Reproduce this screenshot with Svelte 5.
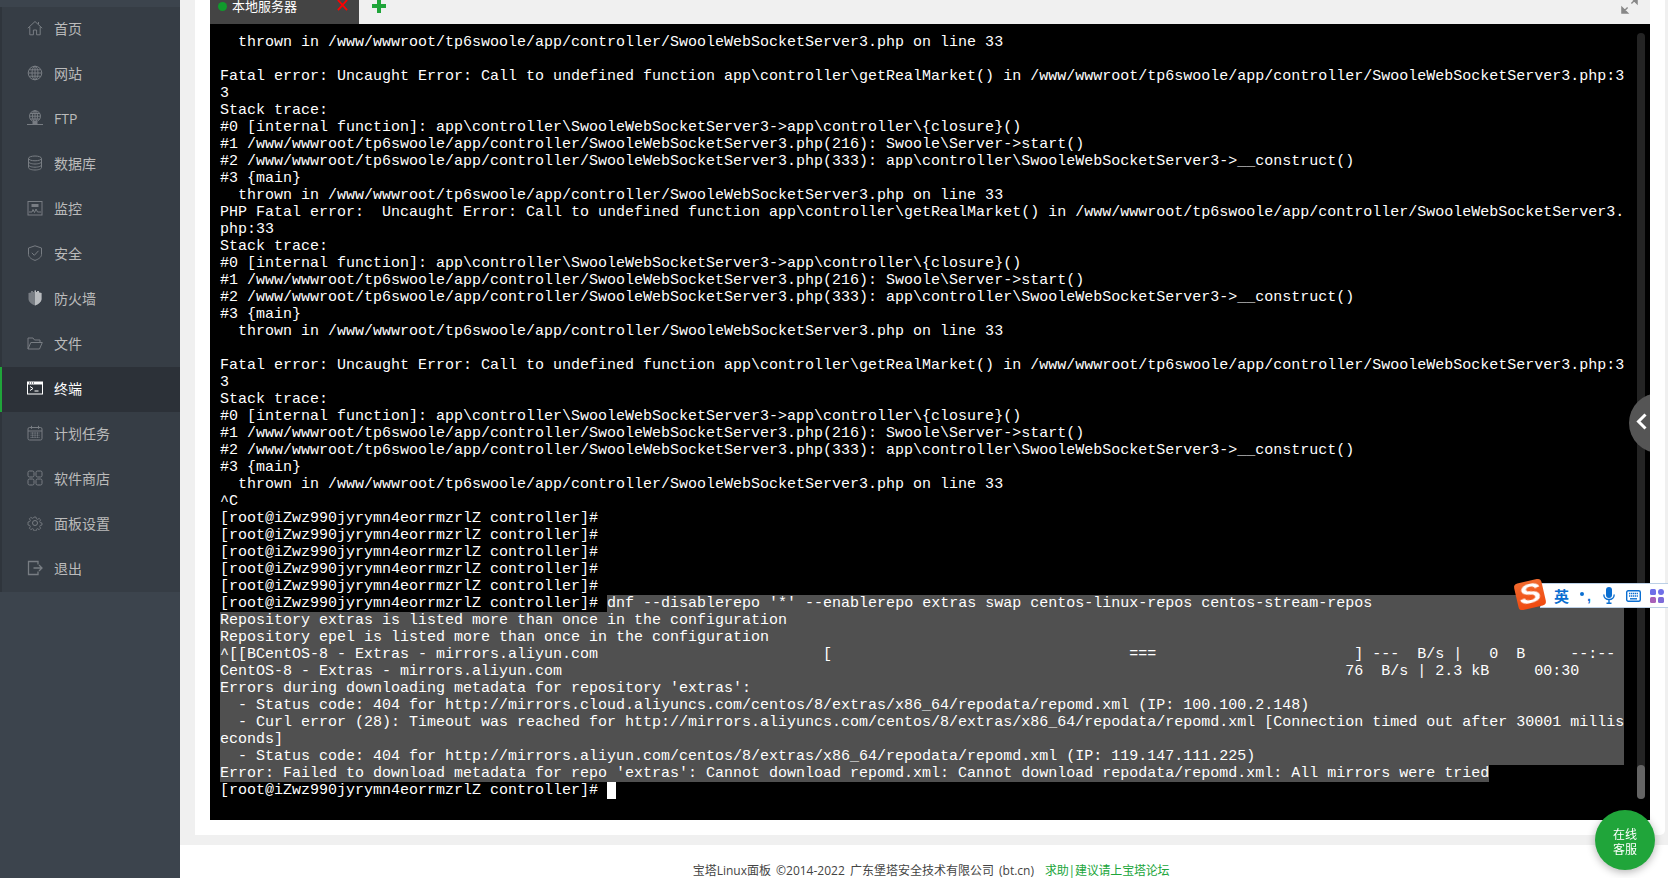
<script>
  const menu = [
    ['home', '首页'], ['globe', '网站'], ['ftp', 'FTP'], ['db', '数据库'], ['monitor', '监控'], ['shield', '安全'],
    ['wall', '防火墙'], ['folder', '文件'], ['term', '终端'], ['cal', '计划任务'], ['apps', '软件商店'], ['gear', '面板设置'], ['exit', '退出']
  ];
  const base = '/www/wwwroot/tp6swoole/app/controller/SwooleWebSocketServer3.php';
  const thrown = `  thrown in ${base} on line 33`;
  const ctrl = 'app\\controller\\SwooleWebSocketServer3';
  const trace = [
    'Stack trace:',
    `#0 [internal function]: ${ctrl}->app\\controller\\{closure}()`,
    `#1 ${base}(216): Swoole\\Server->start()`,
    `#2 ${base}(333): ${ctrl}->__construct()`,
    '#3 {main}',
    thrown
  ];
  const fatal = [
    `Fatal error: Uncaught Error: Call to undefined function app\\controller\\getRealMarket() in ${base}:3`,
    '3'
  ];
  const prompt = '[root@iZwz990jyrymn4eorrmzrlZ controller]# ';
  const sp = (n) => ' '.repeat(n);
  const plain = [
    thrown, '',
    ...fatal, ...trace,
    `PHP Fatal error:  Uncaught Error: Call to undefined function app\\controller\\getRealMarket() in /www/wwwroot/tp6swoole/app/controller/SwooleWebSocketServer3.`,
    'php:33',
    ...trace, '',
    ...fatal, ...trace,
    '^C', prompt, prompt, prompt, prompt, prompt
  ];
  const selected = [
    'Repository extras is listed more than once in the configuration',
    'Repository epel is listed more than once in the configuration',
    `^[[BCentOS-8 - Extras - mirrors.aliyun.com${sp(25)}[${sp(33)}===${sp(22)}] ---  B/s |   0  B     --:--`,
    `CentOS-8 - Extras - mirrors.aliyun.com${sp(87)}76  B/s | 2.3 kB     00:30`,
    "Errors during downloading metadata for repository 'extras':",
    '  - Status code: 404 for http://mirrors.cloud.aliyuncs.com/centos/8/extras/x86_64/repodata/repomd.xml (IP: 100.100.2.148)',
    '  - Curl error (28): Timeout was reached for http://mirrors.aliyuncs.com/centos/8/extras/x86_64/repodata/repomd.xml [Connection timed out after 30001 millis',
    'econds]',
    '  - Status code: 404 for http://mirrors.aliyun.com/centos/8/extras/x86_64/repodata/repomd.xml (IP: 119.147.111.225)'
  ];
</script>

<div class="page">
  <aside class="sidebar">
    <nav class="menu">
      {#each menu as [icon, label]}
        <div class="item" class:active={icon === 'term'}>
          <svg class="ico" viewBox="0 0 16 16" fill="none" stroke="currentColor" stroke-width="1">
            {#if icon === 'home'}
              <path d="M.8 8.2 8 1.5l7.2 6.7M2.8 6.8v8h3.6V10h3.2v4.8h3.6V6.800M11.500 2v2" />
            {:else if icon === 'globe'}
              <circle cx="8" cy="8" r="6.800" /><ellipse cx="8" cy="8" rx="3" ry="6.800" /><path d="M8 1.200v13.600M1.200 8h13.600M2.200 4.800h11.600M2.200 11.200h11.600" />
            {:else if icon === 'ftp'}
              <circle cx="8" cy="6.200" r="5.500" /><ellipse cx="8" cy="6.200" rx="2.500" ry="5.500" /><path d="M8 .7v11M2.500 6.200h11M3.200 3.500h9.600M3.200 9h9.600M0 14.500h16" /><rect x="6" y="12" width="4" height="2.500" fill="currentColor" />
            {:else if icon === 'db'}
              <ellipse cx="8" cy="3.400" rx="6.500" ry="2.400" /><path d="M1.500 3.400v9.200c0 1.300 2.900 2.400 6.500 2.400s6.500-1.100 6.500-2.400V3.400M1.500 6.600c0 1.300 2.900 2.400 6.500 2.400s6.500-1.100 6.500-2.400M1.500 9.800c0 1.300 2.900 2.400 6.500 2.400s6.500-1.100 6.500-2.400" />
            {:else if icon === 'monitor'}
              <rect x="1" y="1.500" width="14" height="13.500" /><rect x="4.500" y="4" width="7" height="3" fill="currentColor" stroke="none" /><path d="M2 12h3l1-2.500 1.500 3 1.500-3.500 1.500 3H14" />
            {:else if icon === 'shield'}
              <path d="M8 .8 14.500 3v6.500c0 2.800-3.300 4.800-6.500 5.900-3.200-1.100-6.500-3.100-6.500-5.900V3ZM4.800 7.800 7.300 10.300 11.500 5.800" />
            {:else if icon === 'wall'}
              <path d="M1.500 3 4 2.400V1h2v1h1V.5h2V2h1V1h2v1.400L14.500 3v6c0 3-3.500 5.500-6.500 6.500C5 14.500 1.500 12 1.500 9Z" fill="currentColor" stroke="none" /><path d="M8 .5h1V2h1V1h2v1.400L14.500 3v6c0 3-3.500 5.500-6.500 6.500Z" fill="#b9bcbf" stroke="none" />
            {:else if icon === 'folder'}
              <path d="M1 14V3h5l1.500 2H13v2.500M1 14h11.500L15.300 7.500H3.800Z" />
            {:else if icon === 'term'}
              <rect x="0" y="1.500" width="16" height="13" fill="#fff" stroke="none" /><rect x="1" y="4.500" width="14" height="9" fill="#2c3138" stroke="none" />
              <path d="M2 3h1M4 3h1M6 3h1" stroke="#2c3138" /><path d="M3 6.500 6 8.500 3 10.500" stroke="#fff" /><path d="M7.500 11h4" stroke="#fff" />
            {:else if icon === 'cal'}
              <rect x="1" y="2.500" width="14" height="12.500" rx="1.500" /><path d="M1 6h14M4.500 .8v3M11.500 .8v3" /><path d="M3.500 8h9M3.500 10.200h9M3.500 12.400h9M5.500 7.500v5.500M8 7.500v5.500M10.500 7.500v5.500" stroke-dasharray="1.200 .8" />
            {:else if icon === 'apps'}
              <rect x="1" y="1" width="6" height="6" rx="1.500" /><rect x="9" y="1" width="6" height="6" rx="1.500" /><rect x="1" y="9" width="6" height="6" rx="1.500" /><rect x="9" y="9" width="6" height="6" rx="1.500" />
            {:else if icon === 'gear'}
              <path d="M6.800 1h2.400l.4 2 1.500.7 1.800-1.100 1.700 1.700-1.100 1.800.7 1.500 2 .4v2.400l-2 .4-.7 1.500 1.100 1.800-1.700 1.700-1.800-1.100-1.500.7-.4 2H6.800l-.4-2-1.500-.7-1.800 1.100-1.700-1.700 1.100-1.800-.7-1.500-2-.4V6.800l2-.4.700-1.500-1.100-1.800 1.700-1.700 1.800 1.100 1.500-.7Z" transform="translate(1.200 1.200) scale(.85)" /><circle cx="8" cy="8" r="2.500" />
            {:else}
              <path d="M11 4.500V1.500H1.500v13H11v-3M6.500 8H15M12 5l3 3-3 3" stroke-width="1.300" />
            {/if}
          </svg>
          <span>{label}</span>
        </div>
      {/each}
    </nav>
  </aside>

  <main class="main">
    <section class="card">
      <header class="tabs">
        <div class="tab">
          <i class="dot"></i>
          <span class="tabname">本地服务器</span>
          <svg class="close" viewBox="0 0 12 12"><path d="M1 0l10 11M11 0 1 11" stroke="#f00" stroke-width="2" fill="none" /></svg>
        </div>
        <svg class="plus" viewBox="0 0 14 14"><path d="M7 0v14M0 7h14" stroke="#20a53a" stroke-width="4" /></svg>
        <svg class="expand" viewBox="0 0 18 18">
          <path d="M1 17v-6l6 6Z M3 15l4-4" fill="#888" stroke="#888" stroke-width="1.500" />
          <path d="M17 1v6l-6-6Z M15 3l-4 4" fill="#888" stroke="#888" stroke-width="1.500" />
        </svg>
      </header>

      <div class="terminal">
        {#each plain as line}
          <div class="line">{line}</div>
        {/each}
        <div class="line split"><span>{prompt}</span><span class="sel grow">dnf --disablerepo '*' --enablerepo extras swap centos-linux-repos centos-stream-repos</span></div>
        {#each selected as line}
          <div class="line sel full">{line}</div>
        {/each}
        <div class="line"><span class="sel">Error: Failed to download metadata for repo 'extras': Cannot download repomd.xml: Cannot download repodata/repomd.xml: All mirrors were tried</span></div>
        <div class="line split"><span>{prompt}</span><i class="cursor"></i></div>

        <div class="scrollbar"><div class="thumb"></div></div>
        <div class="collapse">
          <svg viewBox="0 0 11 17"><path d="M9.500 1.500 2.500 8.500l7 7" fill="none" stroke="#fff" stroke-width="3" /></svg>
        </div>
      </div>
    </section>
    <footer class="footer">
      <span class="copy">宝塔Linux面板 ©2014-2022 广东堡塔安全技术有限公司 (bt.cn)</span>
      <a href="#top">求助|建议请上宝塔论坛</a>
    </footer>
  </main>

  <div class="ime">
    <div class="ime-logo"><b>S</b></div>
    <div class="ime-bar">
      <b class="ime-lang">英</b>
      <span class="ime-punct"><i></i><b>,</b></span>
      <svg class="ime-mic" viewBox="0 0 12 17"><rect x="3" y="0" width="6" height="11" rx="3" fill="#0a6ed1" /><path d="M.8 7.500c0 3 2.200 5 5.200 5s5.200-2 5.200-5M6 12.500V16M3.500 16.300h5" stroke="#0a6ed1" stroke-width="1.400" fill="none" /></svg>
      <svg class="ime-kbd" viewBox="0 0 15 12"><rect x=".7" y=".7" width="13.600" height="10.600" rx="1.500" fill="none" stroke="#0a6ed1" stroke-width="1.400" /><path d="M3 3.500h9M3 6h9" stroke="#0a6ed1" stroke-width="1.500" stroke-dasharray="1.300 .6" /><path d="M4 8.800h7" stroke="#0a6ed1" stroke-width="1.400" /></svg>
      <svg class="ime-apps" viewBox="0 0 14 14"><rect x="0" y="0" width="6" height="6" rx="1.500" fill="#6f6fe8" /><rect x="8" y="0" width="6" height="6" rx="3" fill="#6f6fe8" /><rect x="0" y="8" width="6" height="6" rx="1.500" fill="#a860b8" /><rect x="8" y="8" width="6" height="6" rx="1.500" fill="#7d6ad8" /></svg>
    </div>
  </div>

  <div class="service">在线<br />客服</div>
</div>

<style>
  :global(body) {
    margin: 0;
    background: #fff;
  }
  .page {
    display: flex;
    height: 878px;
    overflow: hidden;
    font-family: "Open Sans", "Noto Sans CJK SC", sans-serif;
  }
  .sidebar {
    flex: 0 0 180px;
    padding-top: 7px;
    background: #3c444d;
  }
  .menu {
    background: #363d45;
    border-left: 2px solid #2f353c;
  }
  .item {
    display: flex;
    align-items: center;
    gap: 11px;
    box-sizing: border-box;
    height: 45px;
    padding: 0 0 3px 25px;
    color: #bbb;
    font-size: 14px;
  }
  .item .ico {
    flex: none;
    width: 16px;
    height: 16px;
    color: #787d83;
  }
  .item.active {
    margin-left: -2px;
    border-left: 2px solid #20a53a;
    background: #2c3138;
    color: #fff;
  }
  .item.active .ico {
    color: #fff;
  }
  .main {
    flex: 1;
    display: flex;
    flex-direction: column;
    min-width: 0;
    background: #fff;
  }
  .card {
    flex: none;
    height: 835px;
    box-sizing: border-box;
    margin-bottom: 10px;
    padding: 0 15px;
    background: #fff;
    box-shadow: 0 0 0 100px #f0f0f0;
    clip-path: inset(0 -3px -10px -15px);
    margin-left: 15px;
    margin-right: 3px;
    border-bottom-right-radius: 5px;
  }
  .tabs {
    position: relative;
    display: flex;
    height: 24px;
    background: #f0f0f0;
    overflow: hidden;
  }
  .tab {
    display: flex;
    align-items: center;
    box-sizing: border-box;
    width: 149px;
    height: 24px;
    padding: 0 11px 12px 8px;
    background: #444;
    color: #fff;
  }
  .dot {
    flex: none;
    width: 9px;
    height: 9px;
    border-radius: 50%;
    background: #109a2c;
    margin-right: 5px;
  }
  .tabname {
    flex: 1;
    font-size: 13px;
    line-height: 12px;
    white-space: nowrap;
  }
  .close {
    flex: none;
    width: 11px;
    height: 11px;
    margin-top: -2px;
  }
  .plus {
    width: 14px;
    height: 14px;
    margin: -1px 0 0 13px;
  }
  .expand {
    position: absolute;
    right: 12px;
    top: -3px;
    width: 17px;
    height: 17px;
  }
  .terminal {
    position: relative;
    box-sizing: border-box;
    height: 796px;
    padding: 10px 0 0 10px;
    background: #000;
    overflow: hidden;
    color: #fff;
    font-family: "Liberation Mono", monospace;
    font-size: 15px;
    line-height: 17px;
  }
  .line {
    height: 17px;
    white-space: pre;
  }
  .split {
    display: flex;
  }
  .sel {
    background: #505050;
  }
  .grow {
    display: block;
    width: 1017px;
  }
  .full {
    width: 1404px;
  }
  .line > .sel {
    display: inline-block;
    height: 17px;
  }
  .cursor {
    display: block;
    width: 9px;
    height: 17px;
    background: #fff;
  }
  .scrollbar {
    position: absolute;
    top: 9px;
    right: 5px;
    bottom: 21px;
    width: 8px;
    border-radius: 4px;
    background: #242424;
  }
  .thumb {
    position: absolute;
    left: 0;
    right: 0;
    bottom: 0;
    height: 34px;
    border-radius: 4px;
    background: #646464;
  }
  .collapse {
    position: absolute;
    top: 369px;
    right: -39px;
    width: 60px;
    height: 60px;
    border-radius: 50%;
    background: #555;
  }
  .collapse svg {
    position: absolute;
    left: 7px;
    top: 20px;
    width: 11px;
    height: 17px;
  }
  .footer {
    display: flex;
    justify-content: center;
    gap: 11px;
    padding: 17px 0 0 14px;
    color: #444;
    font-size: 12px;
    line-height: 17px;
  }
  .copy {
    word-spacing: 2px;
  }
  .footer a {
    color: #20a53a;
    text-decoration: none;
    letter-spacing: -0.2px;
  }
  .ime {
    position: fixed;
    left: 1515px;
    top: 579px;
    width: 153px;
    height: 32px;
  }
  .ime-logo {
    position: absolute;
    z-index: 1;
    left: 1px;
    top: 2px;
    width: 28px;
    height: 27px;
    border-radius: 4px;
    background: linear-gradient(#f2692d, #f04a10);
    transform: rotate(-13deg);
    display: flex;
    align-items: center;
    justify-content: center;
    color: #fff;
    font: italic 900 27px/27px "Liberation Sans", sans-serif;
  }
  .ime-logo b {
    transform: scaleX(1.25);
  }
  .ime-bar {
    position: absolute;
    left: 25px;
    right: 0;
    top: 4px;
    height: 25px;
    box-sizing: border-box;
    padding-left: 13px;
    display: flex;
    align-items: center;
    background: #fff;
    border: 1px solid #bcd0e6;
    border-right: 0;
  }
  .ime-lang {
    width: 15px;
    margin-right: 11px;
    color: #0a6ed1;
    font-size: 15px;
    line-height: 20px;
  }
  .ime-punct {
    display: flex;
    width: 11px;
    margin-right: 12px;
    align-items: center;
    gap: 3px;
    color: #0a6ed1;
  }
  .ime-punct i {
    width: 4px;
    height: 4px;
    border-radius: 50%;
    background: #0a6ed1;
    margin-top: -4px;
  }
  .ime-punct b {
    font: 700 14px/14px "Liberation Sans", sans-serif;
  }
  .ime-mic {
    width: 12px;
    height: 17px;
    margin-right: 11px;
  }
  .ime-kbd {
    width: 15px;
    height: 12px;
    margin-right: 9px;
  }
  .ime-apps {
    width: 14px;
    height: 14px;
  }
  .service {
    position: fixed;
    left: 1595px;
    top: 810px;
    width: 60px;
    height: 60px;
    box-sizing: border-box;
    padding-top: 17px;
    border-radius: 50%;
    background: #20a53a;
    box-shadow: 0 2px 8px rgba(0, 0, 0, 0.3);
    color: #fff;
    font-size: 12px;
    line-height: 15px;
    text-align: center;
  }
</style>
